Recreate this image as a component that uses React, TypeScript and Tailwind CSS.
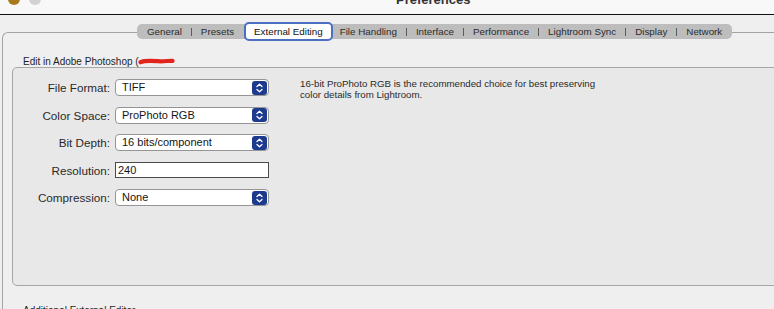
import React from "react";

function Stepper() {
  return (
    <div className="w-[15px] h-[14px] rounded-[3px] bg-[#1c3a8e] flex items-center justify-center">
      <svg width="15" height="14" viewBox="0 0 15 14">
        <path d="M5 5.5 L7.5 3.3 L10 5.5" stroke="white" strokeWidth="1.3" fill="none" strokeLinecap="round" strokeLinejoin="round" />
        <path d="M5 8.5 L7.5 10.7 L10 8.5" stroke="white" strokeWidth="1.3" fill="none" strokeLinecap="round" strokeLinejoin="round" />
      </svg>
    </div>
  );
}

function Select({ value }: { value: string }) {
  return (
    <div className="w-[154px] h-[17px] bg-white border border-[#959595] rounded-[4px] flex items-center pl-[6px] pr-px">
      <span className="flex-1 text-[11px] leading-[15px] text-[#151515]">{value}</span>
      <Stepper />
    </div>
  );
}

function Row({ label, children }: { label: string; children: React.ReactNode }) {
  return (
    <div className="flex items-center h-[17px]">
      <div className="w-[97px] text-right text-[11.7px] leading-[15px] text-[#2a2a2a]">{label}</div>
      <div className="ml-[5px]">{children}</div>
    </div>
  );
}

function Sep() {
  return <div className="w-px h-[8px] bg-[#5a5a5a]" />;
}

export default function App() {
  return (
    <div className="w-[774px] h-[309px] overflow-hidden bg-[#efefef] text-[#222] font-['Liberation_Sans',Arial,sans-serif]">
      {/* title bar */}
      <div className="h-[15px] bg-[#f8f8f8] border-b border-[#111] flex overflow-hidden">
        <div className="flex gap-[9px] ml-[-13px] mt-[-7px] h-[12px] shrink-0">
          <div className="w-[12px] h-[12px] rounded-full bg-[#c4463b]" />
          <div className="w-[12px] h-[12px] rounded-full bg-[#a97a1c]" />
          <div className="w-[12px] h-[12px] rounded-full bg-[#d2d2d2]" />
        </div>
        <div className="ml-[355px] mt-[-8px] text-[13px] font-bold leading-[15px] text-[#333] shrink-0">Preferences</div>
      </div>

      {/* outer tab box */}
      <div className="relative ml-[2px] mt-[17px] w-[800px] h-[300px] border-l border-t border-[#a3a3a3] rounded-tl-[6px]">
        <div className="absolute left-[134px] top-[-9px] h-[15px] bg-[#bdbdbd] rounded-[5px] pl-[10px] pr-[10px] flex items-center gap-[9px] text-[9.8px] leading-[12px] text-[#2b2b2b]">
          <span>General</span>
          <Sep />
          <span>Presets</span>
          <div className="ml-px mr-[-2px] h-[19px] px-[8px] rounded-[5px] border-2 border-[#4d6ec2] bg-white flex items-center text-[#111]">
            External Editing
          </div>
          <span>File Handling</span>
          <Sep />
          <span>Interface</span>
          <Sep />
          <span>Performance</span>
          <Sep />
          <span>Lightroom Sync</span>
          <Sep />
          <span>Display</span>
          <Sep />
          <span>Network</span>
        </div>

        <div className="pt-[23px] pl-[9px]">
          <div className="ml-[11px] flex items-center h-[11px] text-[10px] leading-[11px] text-[#1e1e1e]">
            <span>Edit in Adobe Photoshop (</span>
            <svg width="37" height="9" viewBox="0 0 37 9" className="ml-[-1px] shrink-0">
              <path d="M2.5 5.2 C 7 3.2, 14 3.8, 20 4.2 C 26 4.6, 31 3.6, 34.5 3.8" stroke="#e3241c" strokeWidth="4.2" fill="none" strokeLinecap="round" />
            </svg>
          </div>

          <div className="w-[790px] h-[219px] border border-[#a6a6a6] rounded-[5px] bg-[#e8e8e8] flex pt-[11px]">
            <div className="flex flex-col gap-[10.5px]">
              <Row label="File Format:">
                <Select value="TIFF" />
              </Row>
              <Row label="Color Space:">
                <Select value="ProPhoto RGB" />
              </Row>
              <Row label="Bit Depth:">
                <Select value="16 bits/component" />
              </Row>
              <Row label="Resolution:">
                <div className="w-[154px] h-[16px] bg-white border border-[#4a4a4a] flex items-center pl-[2px] text-[11px] leading-[14px] text-[#151515]">
                  240
                </div>
              </Row>
              <Row label="Compression:">
                <Select value="None" />
              </Row>
            </div>
            <div className="ml-[31px] mt-[-1px] w-[310px] text-[9.7px] leading-[11px] text-[#2a2a2a]">
              16-bit ProPhoto RGB is the recommended choice for best preserving color details from Lightroom.
            </div>
          </div>

          <div className="ml-[11px] mt-[19px] text-[10px] leading-[11px] text-[#1e1e1e]">Additional External Editor</div>
        </div>
      </div>
    </div>
  );
}
